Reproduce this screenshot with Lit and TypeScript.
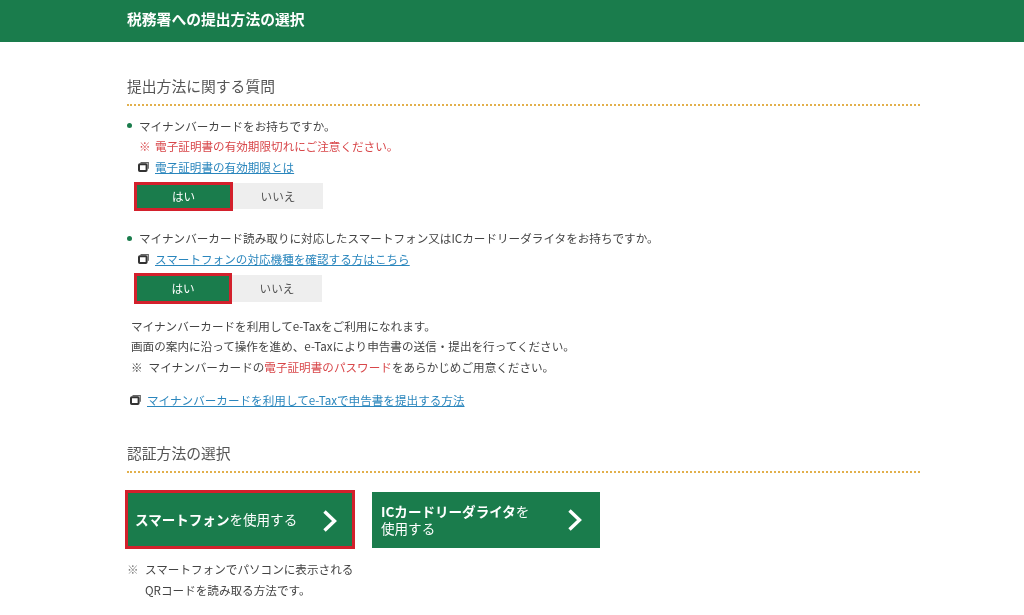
import { LitElement, html, css } from "lit";
import { customElement } from "lit/decorators.js";

const winIcon = html`<svg class="win" width="11" height="10" viewBox="0 0 11 10" aria-hidden="true">
  <path d="M2.5 .6H10.3V6.8" fill="none" stroke="#666" stroke-width="1.2"/>
  <rect x="1" y="2.2" width="7.6" height="6.8" rx=".8" fill="#fff" stroke="#333" stroke-width="2"/>
</svg>`;

const chevron = html`<svg class="chev" width="16" height="24" viewBox="0 0 16 24" aria-hidden="true">
  <path d="M2.5 2.5L12.5 12L2.5 21.5" fill="none" stroke="#fff" stroke-width="3.4"/>
</svg>`;

@customElement("app-root")
export class AppRoot extends LitElement {
  static styles = css`
    :host {
      display: block;
      width: 1024px;
      height: 615px;
      overflow: hidden;
      background: #fff;
      color: #444;
      font-family: "Noto Sans CJK JP", "Noto Sans", sans-serif;
      font-size: 11.6px;
      filter: blur(0.3px);
    }
    .bar {
      height: 42px;
      background: #1a7c4c;
      color: #fff;
      font-size: 14.8px;
      font-weight: 700;
      line-height: 37px;
      padding-left: 127px;
    }
    main {
      width: 793px;
      margin-left: 127px;
    }
    h2 {
      margin: 0;
      font-size: 14.8px;
      font-weight: 400;
      line-height: 22px;
      color: #555;
      padding-bottom: 7px;
      border-bottom: 2px dotted #e2b04c;
    }
    .h1 { margin-top: 33px; }
    .h2 { margin-top: 31px; }
    .line {
      line-height: 20.5px;
      white-space: nowrap;
    }
    .bullet {
      display: flex;
      align-items: center;
      gap: 7px;
    }
    .dot {
      width: 5px;
      height: 5px;
      border-radius: 50%;
      background: #1a7c4c;
    }
    .q1 { margin-top: 9.5px; }
    .q2 { margin-top: 17.5px; }
    .red { color: #d8474a; }
    .warn { display: flex; gap: 4.5px; padding-left: 12px; }
    .lk {
      display: flex;
      align-items: center;
      gap: 6px;
    }
    .ind { padding-left: 11px; }
    a {
      color: #2a86bd;
      text-decoration: underline;
    }
    .win { flex: none; }
    .btns {
      display: flex;
      margin: 4.5px 0 0 7px;
      align-items: center;
    }
    .btns.b { margin-top: 3.5px; }
    .yes, .no {
      box-sizing: border-box;
      display: flex;
      align-items: center;
      justify-content: center;
    }
    .yes {
      width: 99px;
      height: 29px;
      background: #1a7c4c;
      color: #fff;
      border: 3px solid #d3202c;
    }
    .b .yes { width: 98px; height: 31px; }
    .no {
      width: 90px;
      height: 26px;
      background: #eee;
      color: #555;
    }
    .b .no { height: 27px; }
    .result {
      margin: 12.5px 0 0 4px;
    }
    .result .line { line-height: 20.4px; }
    .note { display: flex; gap: 6px; }
    .lk2 { margin: 13px 0 0 3px; gap: 6px; }
    .cards {
      display: flex;
      align-items: center;
      gap: 17px;
      margin: 17.5px 0 0 -2px;
    }
    .card {
      box-sizing: border-box;
      display: flex;
      align-items: center;
      justify-content: space-between;
      background: #1a7c4c;
      color: #fff;
      font-size: 13.55px;
      line-height: 16.5px;
    }
    .card b { font-weight: 700; }
    .c1 {
      width: 230px;
      height: 59px;
      border: 3px solid #d3202c;
      padding: 0 14px 0 7px;
    }
    .c1 .chev { margin-top: 2px; }
    .c2 {
      width: 228px;
      height: 56px;
      padding: 0 17px 0 9px;
    }
    .foot {
      margin: 10px 0 0 0;
      display: flex;
      gap: 6.4px;
      line-height: 21px;
    }
    .foot .mk { color: #777; }
  `;

  render() {
    return html`
      <header class="bar">税務署への提出方法の選択</header>
      <main>
        <h2 class="h1">提出方法に関する質問</h2>
        <div class="line bullet q1"><span class="dot"></span><span>マイナンバーカードをお持ちですか。</span></div>
        <div class="line warn red"><span>※</span><span>電子証明書の有効期限切れにご注意ください。</span></div>
        <div class="line lk ind">${winIcon}<a href="#">電子証明書の有効期限とは</a></div>
        <div class="btns"><div class="yes">はい</div><div class="no">いいえ</div></div>

        <div class="line bullet q2"><span class="dot"></span><span>マイナンバーカード読み取りに対応したスマートフォン又はICカードリーダライタをお持ちですか。</span></div>
        <div class="line lk ind">${winIcon}<a href="#">スマートフォンの対応機種を確認する方はこちら</a></div>
        <div class="btns b"><div class="yes">はい</div><div class="no">いいえ</div></div>

        <div class="result">
          <div class="line">マイナンバーカードを利用してe-Taxをご利用になれます。</div>
          <div class="line">画面の案内に沿って操作を進め、e-Taxにより申告書の送信・提出を行ってください。</div>
          <div class="line note"><span>※</span><span>マイナンバーカードの<span class="red">電子証明書のパスワード</span>をあらかじめご用意ください。</span></div>
        </div>
        <div class="line lk lk2">${winIcon}<a href="#">マイナンバーカードを利用してe-Taxで申告書を提出する方法</a></div>

        <h2 class="h2">認証方法の選択</h2>
        <div class="cards">
          <div class="card c1"><span><b>スマートフォン</b>を使用する</span>${chevron}</div>
          <div class="card c2"><span><b>ICカードリーダライタ</b>を<br />使用する</span>${chevron}</div>
        </div>
        <div class="foot"><span class="mk">※</span><span>スマートフォンでパソコンに表示される<br />QRコードを読み取る方法です。</span></div>
      </main>
    `;
  }
}
